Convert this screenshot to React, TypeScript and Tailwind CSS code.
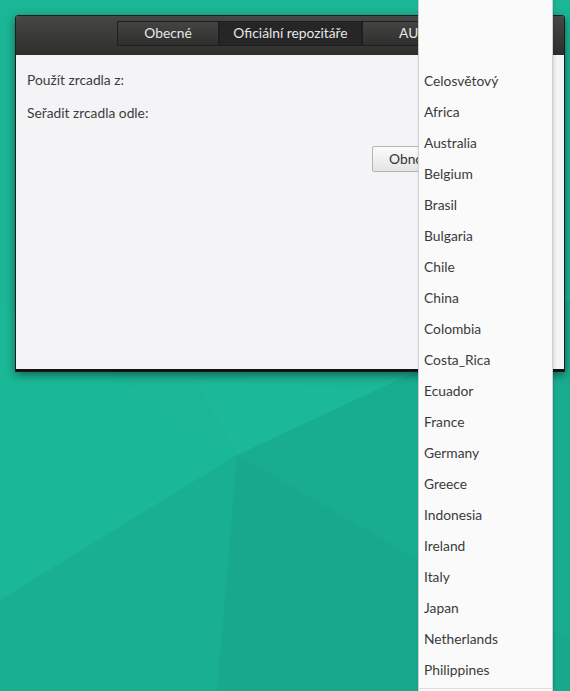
import React from "react";

const countries = [
  "Celosvětový",
  "Africa",
  "Australia",
  "Belgium",
  "Brasil",
  "Bulgaria",
  "Chile",
  "China",
  "Colombia",
  "Costa_Rica",
  "Ecuador",
  "France",
  "Germany",
  "Greece",
  "Indonesia",
  "Ireland",
  "Italy",
  "Japan",
  "Netherlands",
  "Philippines",
];

const font = { fontFamily: "Lato, 'Noto Sans', sans-serif" };

const Wallpaper = () => (
  <svg className="absolute inset-0 w-full h-full" viewBox="0 0 570 691" preserveAspectRatio="none">
    <rect width="570" height="691" fill="#1ab394" />
    <polygon points="0,0 570,0 570,330 237,455 0,300" fill="#1bb696" />
    <polygon points="0,300 237,455 0,600" fill="#1bb897" />
    <polygon points="237,455 196,380 420,390" fill="#1cb998" />
    <polygon points="0,600 237,455 217,691 0,691" fill="#19b092" />
    <polygon points="237,455 570,300 570,691 217,691" fill="#19ad90" />
    <polygon points="237,455 418,560 570,640 570,691 217,691" fill="#18a98d" />
  </svg>
);

const Tab = ({ label, active, width }: { label: string; active?: boolean; width: string }) => (
  <div
    className={`${width} h-[25px] flex items-center justify-center text-[13.8px] text-[#e6e6e6] border border-[#1f1f1f] ${
      active ? "bg-[#262626]" : "bg-gradient-to-b from-[#444443] to-[#2f2f2e]"
    }`}
  >
    {label}
  </div>
);

export default function App() {
  return (
    <div className="relative w-[570px] h-[691px] overflow-hidden" style={font}>
      <Wallpaper />

      {/* window */}
      <div className="absolute left-[15px] top-[15px] w-[550px] h-[357px] flex flex-col border border-[#1a1a1a] rounded-t-[3px] shadow-[0_3px_10px_rgba(0,0,0,0.45)]">
        <div className="h-[39px] bg-gradient-to-b from-[#474746] to-[#2e2e2d] flex items-start pt-[5px] pl-[101px] rounded-t-[3px]">
          <Tab label="Obecné" width="w-[102px]" />
          <Tab label="Oficiální repozitáře" width="w-[143px]" active />
          <Tab label="AUR" width="w-[102px]" />
        </div>
        <div className="flex-1 bg-[#f4f4f6] text-[13.8px] text-[#3c3c3c] px-[11px] border-b-2 border-[#111]">
          <div className="h-[17px] mt-[16px] leading-[17px]">Použít zrcadla z:</div>
          <div className="h-[17px] mt-[16px] leading-[17px]">Seřadit zrcadla odle:</div>
          <div className="flex mt-[25px] pl-[345px]">
            <div className="w-[120px] h-[26px] border border-[#b4b4b4] rounded-[2px] bg-gradient-to-b from-[#fbfbfb] to-[#e4e4e4] pl-[16px] leading-[24px] text-[#333]">
              Obnovit
            </div>
          </div>
        </div>
      </div>

      {/* dropdown list */}
      <div className="absolute left-[418px] top-0 w-[135px] h-[691px] bg-[#fafafa] border-l border-r border-[#cfcfcf] shadow-[1px_0_3px_rgba(0,0,0,0.15)]">
        <div className="pt-[65px] text-[13.8px] text-[#3a3a3a]">
          {countries.map((c) => (
            <div key={c} className="h-[31px] leading-[31px] px-[5px]">
              {c}
            </div>
          ))}
        </div>
        <div className="mt-[3px] border-t border-[#dcdcdc]" />
      </div>
    </div>
  );
}
